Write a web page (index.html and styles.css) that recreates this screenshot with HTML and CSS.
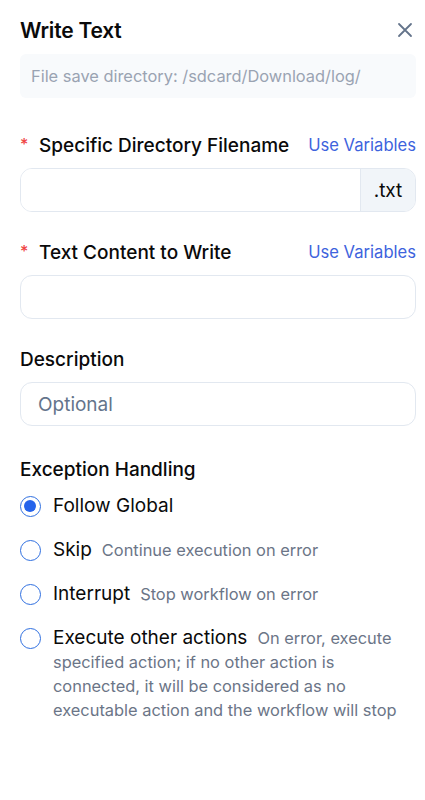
FILE: index.html
```html
<!DOCTYPE html>
<html lang="en">
<head>
<meta charset="utf-8">
<title>Write Text</title>
<link rel="stylesheet" href="styles.css">
</head>
<body>
<div class="panel">
  <div class="header">
    <h1 class="title">Write Text</h1>
    <button class="close" aria-label="Close">
      <svg width="16" height="16" viewBox="0 0 16 16"><path d="M2 2L14 14M14 2L2 14" stroke="#64748b" stroke-width="1.8" stroke-linecap="round"/></svg>
    </button>
  </div>
  <div class="info">File save directory: /sdcard/Download/log/</div>

  <div class="field first">
    <div class="label-row">
      <label class="label"><span class="req">*</span>Specific Directory Filename</label>
      <a class="vars">Use Variables</a>
    </div>
    <div class="input-group">
      <input class="input grouped" type="text">
      <span class="addon">.txt</span>
    </div>
  </div>

  <div class="field">
    <div class="label-row">
      <label class="label"><span class="req">*</span>Text Content to Write</label>
      <a class="vars">Use Variables</a>
    </div>
    <input class="input" type="text">
  </div>

  <div class="field">
    <div class="label-row">
      <label class="label">Description</label>
    </div>
    <input class="input" type="text" placeholder="Optional">
  </div>

  <div class="field exc">
    <div class="label-row">
      <label class="label">Exception Handling</label>
    </div>
    <div class="radios">
      <div class="radio-row">
        <span class="radio checked"></span>
        <div class="radio-text"><span class="opt">Follow Global</span></div>
      </div>
      <div class="radio-row">
        <span class="radio"></span>
        <div class="radio-text"><span class="opt">Skip</span><span class="hint">Continue execution on error</span></div>
      </div>
      <div class="radio-row">
        <span class="radio"></span>
        <div class="radio-text"><span class="opt">Interrupt</span><span class="hint">Stop workflow on error</span></div>
      </div>
      <div class="radio-row">
        <span class="radio"></span>
        <div class="radio-text"><span class="opt">Execute other actions</span><span class="hint">On error, execute specified action; if no other action is connected, it will be considered as no executable action and the workflow will stop</span></div>
      </div>
    </div>
  </div>
</div>
</body>
</html>
```

FILE: styles.css
```css
* { box-sizing: border-box; }
html, body { margin: 0; padding: 0; background: #fff; }
body { font-family: Inter, "Noto Sans", sans-serif; color: #0b0f19; }
.panel { padding: 16px 9px 0 20px; width: 425px; }
.header { display: flex; align-items: center; justify-content: space-between; height: 28px; }
.title { margin: 0; font-size: 21px; font-weight: 600; letter-spacing: -0.2px; color: #0a0a0a; }
.close { border: 0; background: none; padding: 0; width: 16px; height: 16px; margin-right: 3px; display: flex; }
.info { margin-top: 10px; background: #f8fafc; border-radius: 6px; height: 44px; padding: 0 11px; display: flex; align-items: center; font-size: 16.4px; color: #9aa3b2; }
.field { margin-top: 27px; }
.field.first { margin-top: 34px; }
.field.exc { margin-top: 30px; }
.label-row { display: flex; justify-content: space-between; align-items: center; height: 26px; }
.label { font-size: 19px; font-weight: 500; color: #0a0a0a; display: flex; align-items: center; }
.req { color: #ef4444; font-size: 16px; width: 19px; margin-top: -2px; }
.vars { font-size: 16.6px; color: #3e63dd; }
.input { display: block; width: 100%; height: 44px; margin-top: 10px; border: 1px solid #e2e8f0; border-radius: 12px; padding: 0 17px; font-family: inherit; font-size: 19px; background: #fff; outline: none; }
.input::placeholder { color: #64748b; opacity: 1; }
.input-group { display: flex; margin-top: 10px; height: 44px; border: 1px solid #e2e8f0; border-radius: 12px; overflow: hidden; }
.input.grouped { margin: 0; border: 0; border-radius: 0; height: 100%; flex: 1; }
.addon { width: 55px; background: #f1f5f9; border-left: 1px solid #e2e8f0; display: flex; align-items: center; justify-content: center; font-size: 19px; color: #0a0a0a; }
.radios { margin-top: 12px; display: flex; flex-direction: column; gap: 20px; }
.radio-row { display: flex; align-items: flex-start; min-height: 24px; }
.radio { flex: none; width: 21px; height: 21px; border: 1.5px solid #2f6fe0; border-radius: 50%; margin-top: 2px; margin-right: 12px; position: relative; background: #fff; }
.radio.checked::after { content: ""; position: absolute; left: 3px; top: 3px; width: 12px; height: 12px; border-radius: 50%; background: #2563eb; }
.radio-text { line-height: 24px; font-size: 16.4px; }
.opt { font-size: 19px; line-height: 24px; color: #0a0a0a; margin-right: 10px; }
.hint { font-size: 16.4px; line-height: 24px; color: #6b7587; }
```
